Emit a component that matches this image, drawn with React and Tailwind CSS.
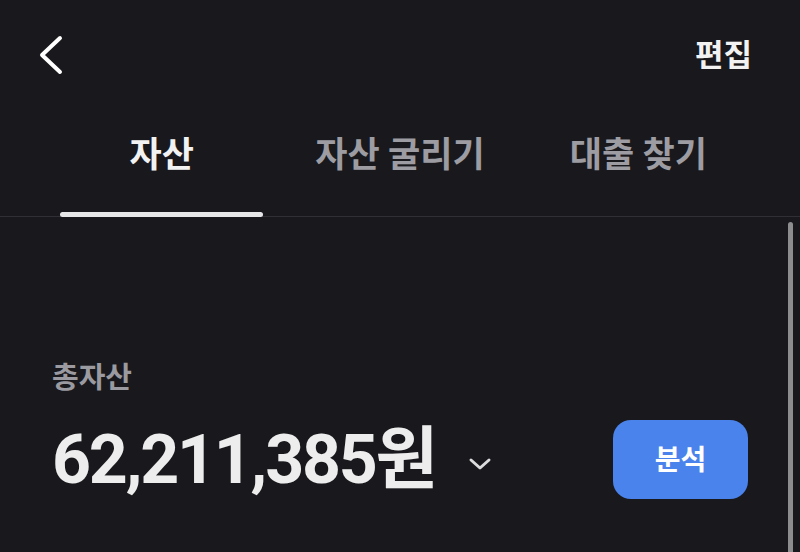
const font = { fontFamily: '"Inter", "Noto Sans CJK KR", sans-serif' }
const numFont = { fontFamily: '"Roboto", "Noto Sans CJK KR", sans-serif' }

export default function App() {
  const tabs = ['자산', '자산 굴리기', '대출 찾기']
  return (
    <div className="relative w-[800px] h-[552px] overflow-hidden bg-[#19191d] text-white" style={font}>
      <div className="h-[110px] flex items-center justify-between pl-[36px] pr-[48px]">
        <svg width="28" height="40" viewBox="0 0 28 40" fill="none">
          <path d="M24 3 L6 20 L24 37" stroke="white" strokeWidth="4" strokeLinecap="round" strokeLinejoin="round" />
        </svg>
        <span className="text-[31px] font-bold text-[#f2f2f2]">편집</span>
      </div>

      <div className="border-b border-[#2f2f35]">
        <div className="grid grid-cols-3 gap-[35px] mx-[60px]">
          {tabs.map((t, i) => (
            <div key={t} className="flex flex-col items-center">
              <span className={`h-[102px] flex items-center pb-[14px] text-[35px] font-bold ${i === 0 ? 'text-[#f2f2f2]' : 'text-[#9c9ca2]'}`}>{t}</span>
              <div className={`h-[5px] w-full rounded-full -mb-[1px] ${i === 0 ? 'bg-[#e6e6e8]' : 'bg-transparent'}`}></div>
            </div>
          ))}
        </div>
      </div>

      <div className="pl-[52px] pr-[52px] pt-[146px]">
        <div className="text-[29px] font-semibold text-[#9a9aa0] leading-none">총자산</div>
        <div className="flex items-center justify-between mt-[28px]">
          <div className="flex items-center gap-[32px]">
            <span className="text-[68px] font-bold tracking-[-2.2px] text-[#ededee] leading-none" style={numFont}>62,211,385원</span>
            <svg width="24" height="16" viewBox="0 0 24 16" fill="none" className="mt-[8px]">
              <path d="M3 4 L12 12 L21 4" stroke="#dcdcde" strokeWidth="3" strokeLinecap="round" strokeLinejoin="round" />
            </svg>
          </div>
          <button className="w-[135px] h-[79px] rounded-[18px] bg-[#4a83ec] text-white text-[28px] font-semibold">분석</button>
        </div>
      </div>

      <div className="absolute right-[7px] top-[222px] bottom-0 w-[5px] rounded-t-full bg-[#8d8d90]"></div>
    </div>
  )
}
